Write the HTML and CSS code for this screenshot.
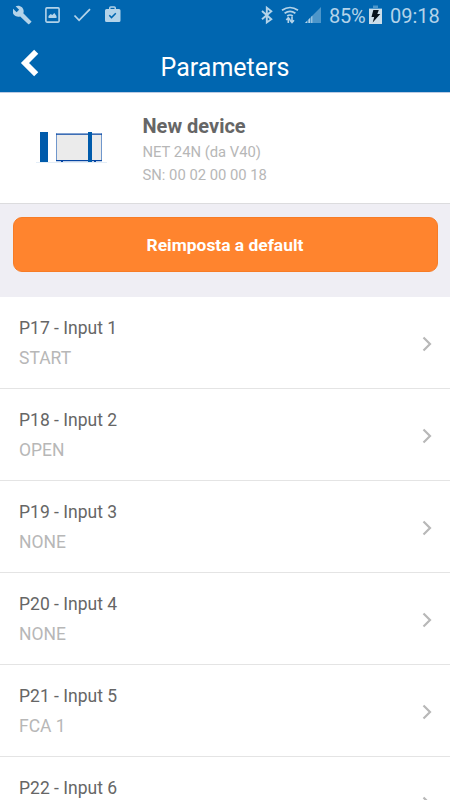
FILE: index.html
```html
<!DOCTYPE html>
<html lang="it">
<head>
  <meta charset="UTF-8" />
  <meta name="viewport" content="width=device-width, initial-scale=1.0"/>
  <title>Parameters</title>
  <link rel="stylesheet" href="styles.css">
</head>
<body>
  <header>
    <div class="statusbar">
      <!-- Notifications -->
      <svg class="notifications" width="110" height="20" viewBox="13 5 110 20">
        <path fill="#b3d3e9" d="M31.2 21.2l-7.9-7.9c.8-2 .3-4.400-1.300-6C20.200 5.600 17.600 5.200 15.600 6.300l3.500 3.500-2.500 2.400-3.500-3.400c-1 2-.6 4.600 1.100 6.300 1.600 1.600 4 2.100 6 1.300l7.900 7.600c.3.300.8.300 1.200 0l2-1.900c.3-.3.300-.7-.1-.9z"/>
        <rect x="45.900" y="7.900" width="13.200" height="14.200" rx="1" fill="none" stroke="#b3d3e9" stroke-width="1.600"/>
        <path fill="#b3d3e9" d="M48.500 18v-2l2.200-2 1.600 1 2-2 2.200 3v2z"/>
        <path fill="none" stroke="#b3d3e9" stroke-width="1.800" d="M74.500 15.500l4.600 4.800L90 9.200"/>
        <path fill="#b3d3e9" fill-rule="evenodd" d="M109 9V8a1.800 1.800 0 0 1 1.800-1.800h3.400A1.800 1.800 0 0 1 116 8v1h3a1.500 1.500 0 0 1 1.500 1.500v10a1.500 1.500 0 0 1-1.500 1.500h-12.500a1.500 1.500 0 0 1-1.500-1.500v-10a1.500 1.500 0 0 1 1.500-1.500zM110.500 9h4V7.700h-4z"/>
        <path fill="none" stroke="#0066b0" stroke-width="1.500" d="M109.300 15.300l2.200 2.300 4.300-4.400"/>
      </svg>
      <!-- Connectivity -->
      <svg class="signals" width="62" height="20" viewBox="260 5 62 20">
        <path fill="none" stroke="#b3d3e9" stroke-width="1.900" d="M262 11l9.300 8.200-4.500 3.300V7.700l4.500 3.500L262 19.200"/>
        <g fill="none" stroke="#b3d3e9" stroke-width="1.700">
          <path d="M282 10.200q8-5.400 16 0"/>
          <path d="M284.600 13.300q5.400-3.800 10.800 0"/>
          <path d="M287.200 16q2.800-2 5.600 0"/>
          <path stroke-width="1.600" d="M288.300 23v-5.500M286.300 20l2-2.200 2 2.200M292 16.500v6M290 20.300l2 2.200 2-2.200"/>
        </g>
        <path fill="#4d96ca" d="M305 23L321 7v16z"/>
        <path fill="#b3d3e9" d="M305 23l2-2v2zM308.500 23v-3.500l1.500-1.500v5zM311.300 23v-6.300l1-1V23z"/>
      </svg>
      <span class="percent">85%</span>
      <svg class="battery" width="13" height="20" viewBox="369 5 13 20">
        <path fill="#4d96ca" d="M373 5.500h5V8h4v3h-13V8h4z"/>
        <path fill="#cbdde9" d="M369 9h13v15h-13z"/>
        <path fill="#06121b" d="M373.300 10h5.500l-1.500 4h3l-7.600 8.500 1.500-5.500h-2.700z"/>
      </svg>
      <span class="clock">09:18</span>
    </div>
    <div class="titlebar">
      <a class="back" href="#" aria-label="Back">
        <svg width="19" height="28" viewBox="0 0 19 28">
          <path fill="none" stroke="#fff" stroke-width="5.800" d="M16.200 2.800L5 14l11.200 11.200"/>
        </svg>
      </a>
      <h1>Parameters</h1>
    </div>
  </header>

  <main>
    <!-- Device -->
    <section class="device">
      <svg class="device-image" width="71" height="34" viewBox="36 130 71 34">
        <path fill="#e3edf7" d="M36 162h71v1H36z"/>
        <path fill="#005bab" d="M40 132h8v30h-8z"/>
        <path fill="#ebebeb" d="M57 134h44v26H57z"/>
        <path fill="none" stroke="#7097cc" d="M56.500 133.500v27M101.500 133.500v27"/>
        <path fill="#0646a3" d="M56 133.500h46v1.200H56zM56 160h46v1.200H56zM61 161h2v1h-2zM94 161h2v1h-2z"/>
        <path fill="#005bab" d="M88 132h4v30h-4z"/>
      </svg>
      <div class="device-info">
        <h2>New device</h2>
        <p>NET 24N (da V40)</p>
        <p>SN: 00 02 00 00 18</p>
      </div>
    </section>

    <section class="actions">
      <button type="button">Reimposta a default</button>
    </section>

    <!-- Parameter list -->
    <ul class="params">
      <li>
        <div><h3>P17 - Input 1</h3><p>START</p></div>
        <svg width="10" height="16" viewBox="0 0 10 16"><path d="M1.500 1.500L8 8l-6.500 6.500"/></svg>
      </li>
      <li>
        <div><h3>P18 - Input 2</h3><p>OPEN</p></div>
        <svg width="10" height="16" viewBox="0 0 10 16"><path d="M1.500 1.500L8 8l-6.500 6.500"/></svg>
      </li>
      <li>
        <div><h3>P19 - Input 3</h3><p>NONE</p></div>
        <svg width="10" height="16" viewBox="0 0 10 16"><path d="M1.500 1.500L8 8l-6.500 6.500"/></svg>
      </li>
      <li>
        <div><h3>P20 - Input 4</h3><p>NONE</p></div>
        <svg width="10" height="16" viewBox="0 0 10 16"><path d="M1.500 1.500L8 8l-6.500 6.500"/></svg>
      </li>
      <li>
        <div><h3>P21 - Input 5</h3><p>FCA 1</p></div>
        <svg width="10" height="16" viewBox="0 0 10 16"><path d="M1.500 1.500L8 8l-6.500 6.500"/></svg>
      </li>
      <li>
        <div><h3>P22 - Input 6</h3></div>
        <svg width="10" height="16" viewBox="0 0 10 16"><path d="M1.500 1.500L8 8l-6.500 6.500"/></svg>
      </li>
    </ul>
  </main>
</body>
</html>
```
FILE: styles.css
```css
* {
  box-sizing: border-box;
}
body {
  font-family: Roboto, "Liberation Sans", sans-serif;
  margin: 0;
  background: #fff;
  color: #666;
}
h1, h2, h3, p {
  margin: 0;
  font-weight: 400;
}
svg {
  display: block;
  flex-shrink: 0;
}
header {
  height: 93px;
  background: #0066b0;
  border-bottom: 1px solid #bccbe3;
}
main {
  height: 707px;
  overflow: hidden;
}
.statusbar {
  display: flex;
  height: 30px;
  padding: 5px 0 0 13px;
  color: #b3d3e9;
  font-size: 20px;
  line-height: 22px;
  white-space: nowrap;
}
.signals {
  margin-left: 137px;
}
.percent {
  width: 40px;
  margin-left: 7px;
  letter-spacing: -0.2px;
}
.clock {
  margin-left: 8px;
}
.titlebar {
  display: grid;
  grid-template-columns: 60px 1fr 60px;
  align-items: center;
  height: 62px;
}
.back {
  padding: 4px 0 0 20px;
}
h1 {
  padding-top: 14px;
  color: #fff;
  font-size: 25px;
  line-height: 30px;
  text-align: center;
}
.device {
  display: flex;
  height: 111px;
  padding: 21px 0 0 36px;
  border-bottom: 1px solid #dcdcde;
}
.device-image {
  margin-top: 16px;
}
.device-info {
  margin-left: 35.5px;
}
.device-info h2 {
  font-size: 20px;
  font-weight: 700;
  line-height: 24px;
  margin-bottom: 3px;
}
.device-info p {
  color: #b7b7b7;
  font-size: 14.8px;
  line-height: 23px;
}
.actions {
  height: 93px;
  padding: 13px 12.5px 0;
  background: #efeef4;
}
button {
  display: block;
  width: 100%;
  height: 55px;
  padding: 1px 0 0;
  border: 1px solid #f77c26;
  border-radius: 9px;
  background: #ff842e;
  color: #fff;
  font-family: inherit;
  font-size: 17.4px;
  font-weight: 700;
}
.params {
  list-style: none;
  margin: 0;
  padding: 0;
}
.params li {
  display: flex;
  justify-content: space-between;
  height: 92px;
  padding: 16px 18.5px 0 19px;
  border-bottom: 1px solid #e4e4e4;
}
.params li:last-child {
  height: 43px;
  overflow: hidden;
  border-bottom: 0;
}
.params h3 {
  font-size: 17.5px;
  line-height: 30px;
}
.params p {
  color: #b7b7b7;
  font-size: 17.5px;
  line-height: 30px;
}
.params svg {
  margin-top: 22.5px;
}
.params path {
  fill: none;
  stroke: #b8b8b8;
  stroke-width: 2.2;
}
```
